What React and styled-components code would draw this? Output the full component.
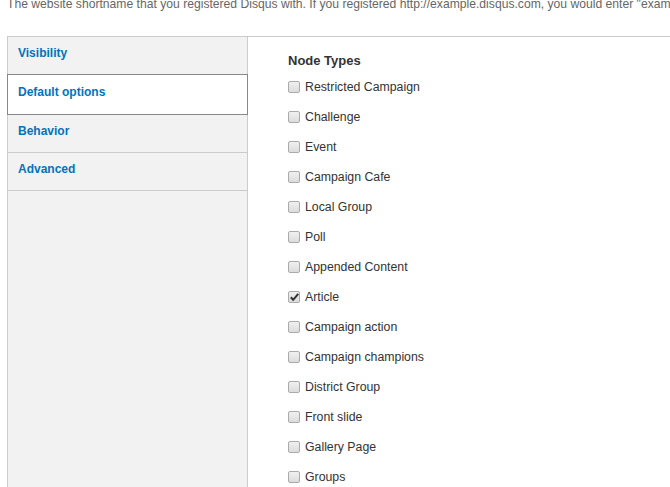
import React from 'react'
import styled, {createGlobalStyle} from 'styled-components';

const GlobalStyle = createGlobalStyle`
    html, body{
        margin: 0;
        padding: 0;
        background: #fff;
        overflow: hidden;
    }
    body{
        font-family: "Liberation Sans", Arial, sans-serif;
        font-size: 12px;
        color: #333;
    }
`;

const tabs = ['Visibility', 'Default options', 'Behavior', 'Advanced'];

const nodeTypes = [
    {label: 'Restricted Campaign'},
    {label: 'Challenge'},
    {label: 'Event'},
    {label: 'Campaign Cafe'},
    {label: 'Local Group'},
    {label: 'Poll'},
    {label: 'Appended Content'},
    {label: 'Article', checked: true},
    {label: 'Campaign action'},
    {label: 'Campaign champions'},
    {label: 'District Group'},
    {label: 'Front slide'},
    {label: 'Gallery Page'},
    {label: 'Groups'},
];

function App() {
    return (
        <Page>
            <GlobalStyle />
            <Description>
                The website shortname that you registered Disqus with. If you registered http://example.disqus.com, you would enter "example" here.
            </Description>
            <VerticalTabs>
                <TabList>
                    {tabs.map((t, i) => (
                        <Tab key={t} $active={i === 1}>
                            <a href="#">{t}</a>
                        </Tab>
                    ))}
                </TabList>
                <TabPane>
                    <Heading>Node Types</Heading>
                    {nodeTypes.map(n => (
                        <Option key={n.label}>
                            <Checkbox $checked={n.checked}>
                                {n.checked && (
                                    <svg width="9" height="8" viewBox="0 0 9 8">
                                        <path d="M0.8 4.2 L3.2 6.8 L8.2 0.8" fill="none" stroke="#333" strokeWidth="2" strokeLinejoin="miter" />
                                    </svg>
                                )}
                            </Checkbox>
                            <label>{n.label}</label>
                        </Option>
                    ))}
                </TabPane>
            </VerticalTabs>
        </Page>
    )
}

const Page = styled.div`
    width: 670px;
    height: 487px;
    overflow: hidden;
`;

const Description = styled.div`
    margin: -5px 0 0 7px;
    line-height: 18px;
    font-size: 12.15px;
    color: #666;
    white-space: nowrap;
`;

const VerticalTabs = styled.div`
    display: flex;
    margin: 23px 0 0 7px;
    border-top: 1px solid #ccc;
    min-height: 460px;
`;

const TabList = styled.ul`
    list-style: none;
    margin: 0;
    padding: 0;
    width: 239px;
    flex-shrink: 0;
    background: #f2f2f2;
    border-left: 1px solid #ccc;
    border-right: 1px solid #ccc;
`;

const Tab = styled.li`
    position: relative;
    border-bottom: 1px solid #ccc;
    background: ${p => p.$active ? '#fff' : 'transparent'};
    a{
        display: block;
        padding: ${p => p.$active ? '10px 10px 14px' : '9px 10px 13px'};
        line-height: 15px;
        font-weight: bold;
        color: #0074bd;
        text-decoration: none;
    }
    ${p => p.$active && `
        margin: -1px -1px 0;
        border: 1px solid #888;
        a{ padding-left: 10px; }
    `}
`;

const TabPane = styled.div`
    flex: 1;
    padding: 16px 0 0 40px;
    background: #fff;
`;

const Heading = styled.h3`
    margin: 0 0 3px;
    font-size: 13px;
    line-height: 16px;
    font-weight: bold;
    color: #333;
`;

const Option = styled.div`
    display: flex;
    align-items: center;
    height: 30px;
    label{
        color: #333;
        font-size: 12.3px;
    }
`;

const Checkbox = styled.span`
    display: flex;
    align-items: center;
    justify-content: center;
    box-sizing: border-box;
    width: 12px;
    height: 12px;
    margin-right: 5px;
    border: 1px solid #aaa;
    border-radius: 2px;
    background: linear-gradient(#f0f0f0, #dcdcdc);
`;

export default App;
